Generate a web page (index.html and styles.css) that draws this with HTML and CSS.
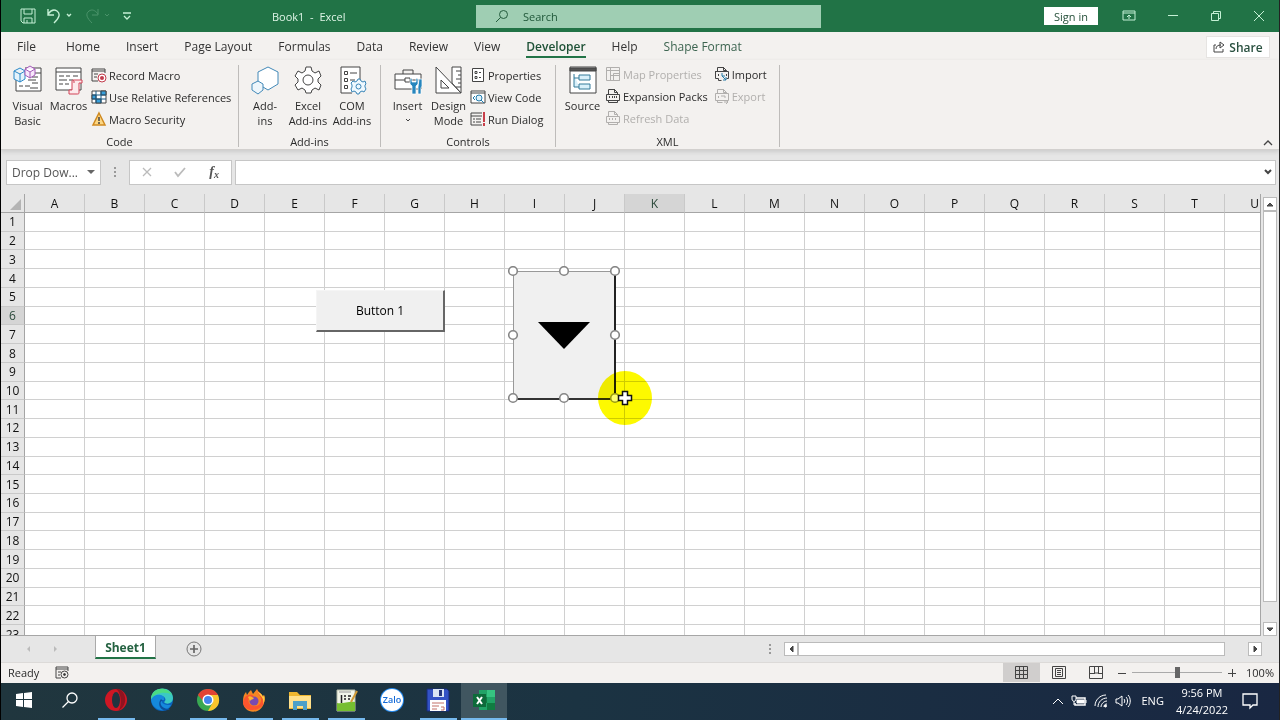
FILE: index.html
```html
<!DOCTYPE html>
<html lang="en">
<head>
<meta charset="utf-8">
<title>Book1 - Excel</title>
<link rel="stylesheet" href="styles.css">
</head>
<body>
<div class="app">
  <header class="titlebar">
    <div class="quick">
      <button aria-label="Save"><svg width="16" height="16" viewBox="0 0 16 16"><path d="M1 1h14v14H3l-2-2zM4 1v5h8V1M4 15v-5h8v5M7 15v-3"/></svg></button>
      <button aria-label="Undo"><svg width="28" height="16" viewBox="0 0 28 16"><path d="M2 1v6h6M2 6c3-4 6-5 9-3 4 3 2 7-3 12" stroke-width="1.4"/><path d="m21 6 2 2 2-2" stroke-width="1.4"/></svg></button>
      <button class="faded" aria-label="Redo"><svg width="28" height="16" viewBox="0 0 28 16"><path d="M14 1v6H8M14 6c-3-4-6-5-9-3-4 3-2 7 3 12M21 6l2 2 2-2"/></svg></button>
      <button aria-label="Customize Quick Access Toolbar"><svg width="10" height="10" viewBox="0 0 10 10"><path d="M1 2h8M2 5l3 3 3-3" stroke-width="1.3"/></svg></button>
    </div>
    <div class="doc-title">Book1&nbsp; -&nbsp; Excel</div>
    <label class="search"><svg width="14" height="14" viewBox="0 0 14 14"><circle cx="8.500" cy="5.500" r="4"/><path d="M5.500 8.500 1 13"/></svg><input type="text" placeholder="Search" aria-label="Search"></label>
    <div class="window-tools">
      <button class="signin">Sign in</button>
      <button aria-label="Ribbon Display Options"><svg width="14" height="12" viewBox="0 0 14 12"><path d="M1 1h12v9H1zM1 3h12M7 9V5M5 7l2-2 2 2"/></svg></button>
      <button aria-label="Minimize"><svg width="12" height="12" viewBox="0 0 12 12"><path d="M1 5.500h10"/></svg></button>
      <button aria-label="Restore"><svg width="12" height="12" viewBox="0 0 12 12"><path d="M1.500 3.500h7v7h-7zM3.500 3V1.500h7v7H9"/></svg></button>
      <button aria-label="Close"><svg width="12" height="12" viewBox="0 0 12 12"><path d="m1 1 10 10M11 1 1 11"/></svg></button>
    </div>
  </header>

  <nav class="tabs">
    <a href="#">File</a><a href="#">Home</a><a href="#">Insert</a><a href="#">Page Layout</a><a href="#">Formulas</a><a href="#">Data</a><a href="#">Review</a><a href="#">View</a><a href="#" class="active">Developer</a><a href="#">Help</a><a href="#" class="context">Shape Format</a>
    <button class="share"><svg width="12" height="12" viewBox="0 0 12 12"><path d="M3 4H1v7h9V8M3 8c0-3 2-4 5-4M7 1l4 3-4 3z"/></svg>Share</button>
  </nav>

  <section class="ribbon">
    <div class="group code">
      <div class="tools">
        <button class="big"><svg width="30" height="30" viewBox="0 0 30 30"><path d="M12 3h16v23H3V15M17 8h11" fill="#fff"/><path d="M6 21h4M12 21h5M19 18h6M15 15h8M19 12h6M17 23h8"/><g stroke="#2b88c8" fill="#e4f3fc"><path d="m1 6 6-3 5 3v8l-5 3-6-3zM1 6l6 3 5-3M7 9v8"/></g><g stroke="#a45bb8" fill="#f8e8fb"><path d="m12 4 5-3 5 3v6l-5 3-5-3zM12 4l5 3 5-3M17 7v6"/></g></svg>Visual<br>Basic</button>
        <button class="big"><svg width="30" height="30" viewBox="0 0 30 30"><path d="M2 3h25v22H2z" fill="#fff"/><path d="M2 7h25M5 11h5M12 11h4M19 11h5M5 15h8M15 15h4M5 19h4M11 19h4"/><path d="M19 15h9v3h-3v10c0 1-1 1-2 1h-8v-4h3V16c0-1 1-1 2 0v2" fill="#fceaec" stroke="#d24357"/></svg>Macros</button>
        <div class="stack">
          <button><svg width="16" height="16" viewBox="0 0 16 16"><path d="M7 14H1V2h13v4M1 4h13M3 7h4M3 10h3"/><circle cx="11" cy="11" r="4" fill="#fff" stroke="#c23b4b"/><circle cx="11" cy="11" r="2" fill="#c23b4b" stroke="none"/></svg>Record Macro</button>
          <button><svg width="16" height="16" viewBox="0 0 16 16"><path d="M1 2h14v12H1z" fill="#fff"/><path d="M1 6h4v4H1zM10 2h5v4h-5zM5 10h5v4H5z" fill="#37a0dc"/><path d="M1 6h14M1 10h14M5 2v12M10 2v12" stroke="#185b84"/></svg>Use Relative References</button>
          <button><svg width="16" height="16" viewBox="0 0 16 16"><path d="m8 2 6 12H2z" fill="#fcd784" stroke="#d08a20" stroke-width="1.5"/><path d="M8 6v4M8 11v2" stroke-width="1.5"/></svg>Macro Security</button>
        </div>
      </div>
      <h2>Code</h2>
    </div>
    <div class="group addins">
      <div class="tools">
        <button class="big"><svg width="30" height="30" viewBox="0 0 30 30"><g stroke="#4289b8"><path d="m18 2 10 5v12l-10 6L8 19V7z" fill="#fff"/><path d="m8 16 5 3v6l-5 4-6-4v-6z" fill="#eef6fb"/></g></svg>Add-<br>ins</button>
        <button class="big"><svg width="30" height="30" viewBox="0 0 30 30"><path d="m12 6 1-4h5l1 4 3 2 4-2 2 5-3 3v3l3 3-2 5-4-2-3 2-1 3h-5l-1-3-3-2-4 2-3-5 3-3v-3l-3-3 3-5 4 2z" fill="#fff"/><circle cx="15" cy="15" r="5"/></svg>Excel<br>Add-ins</button>
        <button class="big"><svg width="30" height="30" viewBox="0 0 30 30"><path d="M15 28H4V2h19v13" fill="#fff"/><path d="M7.500 6.500h3v3h-3zM7.500 13.500h3v3h-3zM7.500 20.500h3v3h-3zM13 8h7M13 15h5"/><path d="m20 16 1-2h2l1 2 2 1 2-1 1 3-1 1v2l1 2-2 3-2-1-2 1-1 2h-2l-1-2-2-1-2 1-1-3 1-2v-2l-1-2 2-2 2 1z" fill="#eff9ff" stroke="#3985b7"/><circle cx="21.500" cy="21.500" r="2.500" stroke="#3985b7"/></svg>COM<br>Add-ins</button>
      </div>
      <h2>Add-ins</h2>
    </div>
    <div class="group controls">
      <div class="tools">
        <button class="big"><svg width="30" height="30" viewBox="0 0 30 30"><path d="M2 9h26v15H2z" fill="#fff"/><path d="M10 9V5h10v4M2 15h10M17 15h11M12 13h5v4h-5z"/><path d="M17 14v5l2 2v8h4v-8l2-2v-5l-2-1v4h-4v-4zM26 14h3v7l-1 2v6h-3v-7z" fill="#2786bd" stroke="#fff" stroke-width=".7"/></svg>Insert<svg class="caret" width="8" height="5" viewBox="0 0 8 5"><path d="m2 1 2 2 2-2"/></svg></button>
        <button class="big"><svg width="30" height="30" viewBox="0 0 30 30"><path d="M18 18V2h9v26z" fill="#fff"/><path d="M2 2v26h25z" fill="#fff"/><path d="M7 15v8h8zM27 6h-5M27 10h-3M27 14h-5M27 18h-3M27 22h-5"/></svg>Design<br>Mode</button>
        <div class="stack">
          <button><svg width="16" height="16" viewBox="0 0 16 16"><path d="M2.500 1.500h11v13h-11z" fill="#fff"/><path d="M5 4.500h2v2H5zM5 9.500h2v2H5zM9 5.500h2M9 10.500h2"/></svg>Properties</button>
          <button><svg width="16" height="16" viewBox="0 0 16 16"><path d="M1 2h14v12H1zM1 4h14" fill="#fff"/><circle cx="9" cy="9" r="3" fill="#dff2fb" stroke="#237bad"/><path d="m11 11 3 3M5 7 3 9l2 2" stroke="#237bad"/></svg>View Code</button>
          <button><svg width="16" height="16" viewBox="0 0 16 16"><path d="M12 14H1V2h11M1 5h11M3 8h2M6 8h5M3 11h2M6 11h5"/><path d="M14 1v10M14 12v3" stroke="#c83e49" stroke-width="2"/></svg>Run Dialog</button>
        </div>
      </div>
      <h2>Controls</h2>
    </div>
    <div class="group xml">
      <div class="tools">
        <button class="big"><svg width="30" height="30" viewBox="0 0 30 30"><path d="M2 2h26v26H2z" fill="#fff"/><path d="M2 3h26v3H2z" fill="#555"/><path d="M11 10h11v5H11zM11 19h11v5H11zM6 9v13h5M6 13h5" fill="#d9f0fa" stroke="#357b99"/></svg>Source</button>
        <div class="stack">
          <button disabled><svg width="16" height="16" viewBox="0 0 16 16"><path d="M1.500 1.500h13v13h-13zM1 4.500h13M5.500 2v12M5 9.500h9M8.500 7.500h6v7h-6z"/></svg>Map Properties</button>
          <button><svg width="16" height="16" viewBox="0 0 16 16"><path d="M3.500 6V1.500h6l3 3v2M9.500 1v3.500h3M1.500 6.500h13v6h-13zM3.500 12v2.500h9V12M4.500 8v2M7.500 8v2M9.500 8v2M11.500 8v2"/></svg>Expansion Packs</button>
          <button disabled><svg width="16" height="16" viewBox="0 0 16 16"><path d="M3.500 6V1.500h6l3 3v2M9.500 1v3.500h3M1.500 6.500h13v6h-13zM3.500 12v2.500h9V12M5 8 4 9l1 1M7.500 8v2M10 8l1 1-1 1"/></svg>Refresh Data</button>
        </div>
        <div class="stack">
          <button><svg width="16" height="16" viewBox="0 0 16 16"><path d="M3.500 5V1.500h6l3 3v1M9.500 1v3.500h3M1.500 5.500h13v7h-2M1.500 5v7.500h3v2h3M5 8 4 9l1 1M12 8l1 1-1 1"/><path d="M8 7v3h3M8 10l4 4M12 11v3H9" stroke="#267aa5"/></svg>Import</button>
          <button disabled><svg width="16" height="16" viewBox="0 0 16 16"><path d="M3.500 5V1.500h6l3 3v1M9.500 1v3.500h3M1.500 5.500h13v7h-13zM3.500 12v2.500h5M5 8 4 9l1 1M7 8h4v2M10 14h4M12 12l2 2-2 2"/></svg>Export</button>
        </div>
      </div>
      <h2>XML</h2>
    </div>
    <button class="collapse" aria-label="Collapse the Ribbon"><svg width="10" height="7" viewBox="0 0 10 7"><path d="m1 5 4-4 4 4" stroke-width="1.3"/></svg></button>
  </section>

  <section class="formula-bar">
    <button class="name-box">Drop Dow...<svg width="8" height="5" viewBox="0 0 8 5"><path d="M0 0h8L4 4z" fill="#666" stroke="none"/></svg></button>
    <span class="dots"></span>
    <div class="entry">
      <button disabled aria-label="Cancel"><svg width="12" height="12" viewBox="0 0 12 12"><path d="m2 2 8 8M10 2l-8 8" stroke-width="1.3"/></svg></button>
      <button disabled aria-label="Enter"><svg width="14" height="12" viewBox="0 0 14 12"><path d="m2 6 3 4 7-8" stroke-width="1.8"/></svg></button>
      <button class="fx" aria-label="Insert Function">f<small>x</small></button>
    </div>
    <label class="formula"><input type="text" aria-label="Formula bar"><svg width="10" height="7" viewBox="0 0 10 7"><path d="m2 1 3 3 3-3" stroke-width="2"/></svg></label>
  </section>

  <main class="workspace">
    <div class="sheet">
      <table class="cells"><thead><tr id="columns"><th class="corner"><svg width="12" height="12" viewBox="0 0 12 12"><path d="M11 0v11H0z" fill="#b4b4b4" stroke="none"/></svg></th></tr></thead><tbody id="rows"></tbody></table>
      <button class="form-button">Button 1</button>
      <div class="shape">
        <svg width="52" height="27" viewBox="0 0 52 27"><path d="M0 0h52L26 27z" fill="#000" stroke="none"/></svg>
      </div>
      <span class="halo"></span>
      <svg class="handles" width="112" height="138" viewBox="0 0 112 138"><g fill="#fff" stroke="#858585" stroke-width="1.6"><circle cx="5" cy="5" r="4.300"/><circle cx="56" cy="5" r="4.300"/><circle cx="107" cy="5" r="4.300"/><circle cx="5" cy="69" r="4.300"/><circle cx="107" cy="69" r="4.300"/><circle cx="5" cy="132" r="4.300"/><circle cx="56" cy="132" r="4.300"/><circle cx="107" cy="132" r="4.300" fill="#ffff70" stroke="#999a12"/></g></svg>
      <svg class="cursor" width="16" height="16" viewBox="0 0 16 16"><path d="M5.500 1.500h5v4h4v5h-4v4h-5v-4h-4v-5h4z" fill="#fff" stroke="#111" stroke-width="1.500"/></svg>
    </div>
    <div class="vscroll">
      <button aria-label="Scroll up"><svg width="8" height="5" viewBox="0 0 8 5"><path d="m1 4 3-3 3 3z" fill="#555"/></svg></button>
      <span class="vthumb"></span>
      <button aria-label="Scroll down"><svg width="8" height="5" viewBox="0 0 8 5"><path d="m1 1 3 3 3-3z" fill="#555"/></svg></button>
    </div>
  </main>

  <section class="sheet-bar">
    <div class="sheet-nav">
      <button disabled aria-label="Previous sheet"><svg width="5" height="8" viewBox="0 0 5 8"><path d="M4 1v6L1 4z" fill="#bbb" stroke="none"/></svg></button>
      <button disabled aria-label="Next sheet"><svg width="5" height="8" viewBox="0 0 5 8"><path d="M1 1v6l3-3z" fill="#bbb" stroke="none"/></svg></button>
    </div>
    <button class="sheet-tab">Sheet1</button>
    <button class="new-sheet" aria-label="New sheet"><svg width="16" height="16" viewBox="0 0 16 16"><circle cx="8" cy="8" r="7" stroke="#777"/><path d="M8 4v8M4 8h8" stroke="#666" stroke-width="1.700"/></svg></button>
    <span class="dots"></span>
    <div class="hscroll">
      <button aria-label="Scroll left"><svg width="5" height="8" viewBox="0 0 5 8"><path d="M4 1v6L1 4z" fill="#444"/></svg></button>
      <span class="hthumb"></span>
      <button aria-label="Scroll right"><svg width="5" height="8" viewBox="0 0 5 8"><path d="M1 1v6l3-3z" fill="#444"/></svg></button>
    </div>
  </section>

  <footer class="status">
    <span class="ready">Ready</span>
    <button aria-label="Record macro"><svg width="14" height="13" viewBox="0 0 14 13"><path d="M6 12H1V1h12v4M1 3h12M3 6h3M3 9h2"/><circle cx="9.500" cy="8.500" r="3.500"/><circle cx="9.500" cy="8.500" r="1" fill="#333"/></svg></button>
    <div class="views">
      <button class="chosen" aria-label="Normal"><svg width="13" height="13" viewBox="0 0 13 13"><path d="M.5.500h12v12H.5zM.5 4.500h12M.5 8.500h12M4.500.5v12M8.500.5v12"/></svg></button>
      <button aria-label="Page Layout"><svg width="14" height="13" viewBox="0 0 14 13"><path d="M.5.500h13v12H.5zM3.500 2.500h7v8h-7zM5 4.500h4M5 6.500h4M5 8.500h4"/></svg></button>
      <button aria-label="Page Break Preview"><svg width="14" height="13" viewBox="0 0 14 13"><path d="M.5.500h13v12H.5zM5.500 1v6h4V1M1 7.500h5M9 7.500h4"/></svg></button>
    </div>
    <div class="zoom"><button aria-label="Zoom out"><svg width="8" height="8" viewBox="0 0 8 8"><path d="M0 4.500h8"/></svg></button><input type="range" min="0" max="100" value="51" aria-label="Zoom"><button aria-label="Zoom in"><svg width="8" height="8" viewBox="0 0 8 8"><path d="M0 4.500h8M4.500 0v8"/></svg></button><span>100%</span></div>
  </footer>

  <div class="taskbar">
    <div class="launchers">
      <button aria-label="Start"><svg width="16" height="16" viewBox="0 0 16 16"><path d="m0 2 7-1v6H0zM8 1l8-1v7H8zM0 8h7v7l-7-1zM8 8h8v8l-8-1z" fill="#fff" stroke="none"/></svg></button>
      <button aria-label="Search"><svg width="16" height="16" viewBox="0 0 16 16"><circle cx="10" cy="6" r="5" stroke="#fff" stroke-width="1.300"/><path d="m6.500 9.500-6 6" stroke="#fff" stroke-width="1.300"/></svg></button>
      <button class="open" aria-label="Opera"><svg width="24" height="24" viewBox="0 0 24 24"><circle cx="12" cy="12" r="11" fill="#cf1724" stroke="none"/><path d="M12 1c8-2 15 15 2 22 4-3 4-19-2-22" fill="#8f1320" stroke="none"/><ellipse cx="12" cy="12" rx="4" ry="8" fill="#213440" stroke="none"/></svg></button>
      <button aria-label="Edge"><svg width="24" height="24" viewBox="0 0 24 24"><circle cx="12" cy="12" r="11" fill="#0a63be" stroke="none"/><path d="M1 12C0-3 23-3 23 10c0 6-7 7-9 4 3-2 1-6-3-6-5 0-9 3-10 4" fill="#3bc9c3" stroke="none"/><path d="M1 11C2-2 18-2 22 7c-5-4-17-3-21 4" fill="#4bdb83" stroke="none"/><path d="M1 12C4 4 16 6 14 12c-4-1-3 6 7 5-5 9-18 6-20-5" fill="#1589dc" stroke="none"/><path d="M14 14c-4-5-7 7 6 7-8 5-14-4-9-10" fill="#0b4f9d" stroke="none"/></svg></button>
      <button class="open" aria-label="Chrome"><svg width="24" height="24" viewBox="0 0 24 24"><g stroke="none"><circle cx="12" cy="12" r="11" fill="#39a852"/><path d="M2 7C6-1 18-1 22 7H12L8 14z" fill="#e34334"/><path d="M12 7h10c4 9-3 16-10 16l5-9z" fill="#fbc52d"/><circle cx="12" cy="12" r="5.500" fill="#fff"/><circle cx="12" cy="12" r="4" fill="#4485ed"/></g></svg></button>
      <button class="open" aria-label="Firefox"><svg width="24" height="24" viewBox="0 0 24 24"><g stroke="none"><path d="M7 4 9 2l2 4 4-5c1 4 5 4 6 8l1-2c4 20-21 22-21 6 0-4 1-7 3-9l1 3z" fill="#f58623"/><path d="m15 1c0 6 5 7 4 12-1 6-9 7-12 2-2-4 1-6 4-5 2-3-2-4-4-3-3 0-5 3-6 7C1 27 27 24 22 7l-1 2c-1-4-5-4-6-8" fill="#fc552e"/><path d="M15 2c1 5 8 7 6 14 2-3 2-6 1-9l-1 2c-1-4-5-4-6-7" fill="#ffcf3c"/><circle cx="12" cy="13" r="4.500" fill="#794ab1"/><path d="M6 9c2-2 4 0 6 1-1 2-3 1-4 3z" fill="#ffb42e"/></g></svg></button>
      <button class="open" aria-label="File Explorer"><svg width="24" height="24" viewBox="0 0 24 24"><g stroke="none"><path d="M1 4h8l3 3h11v14H1z" fill="#eeb62f"/><path d="M1 8h22v12H1z" fill="#ffe08b"/><path d="M5 13h14v9h-4v-4H9v4H5z" fill="#4da0c7"/></g></svg></button>
      <button class="open" aria-label="Notepad++"><svg width="24" height="24" viewBox="0 0 24 24"><path d="M3 2h18v21H3z" fill="#f1f5e9" stroke="#b5bbaa"/><path d="M3 15c6 1 12-2 18-1v9H3z" fill="#76be31" stroke="none"/><path d="M7.500 7v8M10 8h2M10 11h2M14 8h3M14 11h2" stroke="#222" stroke-width="1.500"/><path d="M5 4h12" stroke="#999"/><path d="m23 3-6 11" stroke="#d19b37" stroke-width="2"/></svg></button>
      <button aria-label="Zalo"><span class="zalo">Zalo</span></button>
      <button class="open" aria-label="Save tool"><svg width="24" height="24" viewBox="0 0 24 24"><path d="M1 1h20l2 2v20H1z" fill="#3352c5" stroke="#172a78"/><path d="M7 1h11v8H7z" fill="#d9e4f4" stroke="none"/><path d="M13 2h3v6h-3z" fill="#24357e" stroke="none"/><path d="M4 12h16v11H4z" fill="#fff" stroke="none"/><path d="M6 15h12M6 18h7M6 21h5M15 19h3v3h-3" stroke="#c27168"/></svg></button>
      <button class="open current" aria-label="Excel"><svg width="24" height="24" viewBox="0 0 24 24"><g stroke="none"><path d="M7 2h16v20H7z" fill="#21a366"/><path d="M15 2h8v7h-8z" fill="#36c481"/><path d="M15 15h8v7h-8zM7 9h8v6H7z" fill="#107c41"/><path d="M1 6h13v13H1z" fill="#0d6b3a"/></g><path d="m5 9 5 7M10 9l-5 7" stroke="#fff" stroke-width="2"/></svg></button>
    </div>
    <div class="tray">
      <svg width="12" height="8" viewBox="0 0 12 8"><path d="m1 7 5-5 5 5"/></svg>
      <svg width="16" height="12" viewBox="0 0 16 12"><path d="M5 3h9v7H4V8" stroke-width="1.500"/><path d="M6 5h7v3H6z" fill="#fff"/><path d="M15 5v3M1 1v3c0 3 4 3 4 0V1zM3 6v4"/></svg>
      <svg width="14" height="14" viewBox="0 0 14 14"><path d="M1 12C1 6 6 1 12 1M4 13c0-5 4-9 9-9M7 13c0-3 3-6 6-6M10 13c0-2 1-3 3-3"/><circle cx="11.500" cy="12" r="1" fill="#fff"/></svg>
      <svg width="16" height="14" viewBox="0 0 16 14"><path d="M1 5h2l4-3v10L3 9H1zM9 5c1 1 1 3 0 4M11 3c2 2 2 6 0 8M13 1c3 3 3 9 0 12"/></svg>
      <span>ENG</span>
      <time>9:56 PM<br>4/24/2022</time>
      <svg width="18" height="18" viewBox="0 0 18 18"><path d="M2 2h14v11h-4l-3 3v-3H2z" stroke-width="1.300"/></svg>
    </div>
  </div>
</div>
<script src="grid.js"></script>
</body>
</html>
```

FILE: styles.css
```css
* { box-sizing: border-box; }
body { margin: 0; font: 11px/15px "Open Sans", "Noto Sans", sans-serif; color: #2b2b2b; }
button { font: inherit; color: inherit; background: none; border: 0; padding: 0; display: flex; align-items: center; justify-content: center; }
svg { flex: none; display: block; fill: none; stroke: #444; stroke-width: 1; }
input { font: inherit; border: 0; background: none; min-width: 0; outline: 0; }
.app { height: 100vh; display: flex; flex-direction: column; overflow: hidden; background: #e6e6e6; border-left: 1px solid #000; border-right: 1px solid #222; }

.titlebar { flex: none; height: 32px; display: flex; align-items: center; background: #217346; color: #dff5e7; }
.titlebar svg { stroke: #c5f0d5; }
.quick { width: 271px; display: flex; align-items: center; gap: 10px; padding-left: 19px; }
.quick .faded { opacity: .25; }
.doc-title { width: 204px; }
.search { width: 345px; height: 23px; display: flex; align-items: center; gap: 14px; padding-left: 19px; background: #9fceb3; }
.titlebar .search svg { stroke: #245c3d; }
.search input { flex: 1; padding: 0; }
.search input::placeholder { color: #1f5739; opacity: 1; }
.window-tools { margin-left: auto; display: flex; align-items: center; gap: 31px; padding-right: 14px; }
.signin { width: 54px; height: 18px; background: #fff; color: #26503a; margin-right: -7px; }

.tabs { flex: none; height: 28px; display: flex; align-items: stretch; gap: 26px; padding: 0 9px 0 16px; background: #f3f1ef; font-size: 12px; }
.tabs a { color: #333; text-decoration: none; padding-top: 7px; height: 26px; white-space: nowrap; }
.tabs a:first-child { margin-right: 4px; }
.tabs .active { color: #1d5136; font-weight: 600; border-bottom: 2px solid #217346; }
.tabs .context { color: #3c6450; }
.share { margin: 4px 0 2px auto; width: 64px; gap: 4px; background: #fff; border: 1px solid #e6e4e2; font-weight: 600; color: #2a5140; }

.ribbon { flex: none; height: 90px; display: flex; padding: 5px 0 2px; background: #f3f1ef; border-bottom: 1px solid #d2d0ce; box-shadow: 0 2px 4px #ccc; z-index: 1; }
.group { display: flex; flex-direction: column; justify-content: space-between; border-right: 1px solid #bebcba; white-space: nowrap; }
.group h2 { margin: 0; font: inherit; line-height: 11px; text-align: center; }
.tools { display: flex; align-items: flex-start; padding-left: 6px; }
.code { width: 238px; }
.addins { width: 142px; }
.addins .tools { padding-left: 5px; }
.controls { width: 175px; }
.xml { width: 224px; }
.big { width: 41px; flex-direction: column; justify-content: flex-start; line-height: 15px; }
.big > svg:first-child { margin-bottom: 3px; }
.addins .big { width: 44px; }
.addins .big:first-child { width: 42px; }
.caret { margin-top: 5px; }
.stack { display: flex; flex-direction: column; align-items: flex-start; padding-left: 2px; margin-top: -1px; }
.stack button { height: 22px; gap: 2px; }
.stack button:disabled { color: #b1afad; }
.stack button:disabled svg { stroke: #b1afad; }
.controls .stack { padding-left: 1px; }
.xml .stack { margin-top: -2px; }
.xml .stack + .stack { padding-left: 6px; }
.collapse { margin: auto 6px 0 auto; }

.formula-bar { flex: none; height: 44px; display: flex; align-items: center; padding: 0 3px 0 5px; font-size: 12px; }
.name-box { width: 95px; height: 25px; justify-content: space-between; padding: 0 5px; background: #fff; border: 1px solid #c6c6c6; color: #555; }
.dots { width: 28px; height: 12px; background: radial-gradient(circle, #999 1px, transparent 1px) center top / 28px 4px; }
.entry { width: 103px; height: 25px; display: grid; grid-template-columns: repeat(3, 1fr); background: #fff; border: 1px solid #c6c6c6; }
.entry :disabled svg { stroke: #bbb; }
.fx { font: italic 700 14px "Liberation Serif", serif; color: #555; }
.fx small { font-size: 10px; padding-top: 4px; }
.formula { flex: 1; height: 25px; margin-left: 3px; display: flex; align-items: center; background: #fff; border: 1px solid #c6c6c6; padding-right: 2px; }
.formula input { flex: 1; }

.workspace { flex: 1; min-height: 0; display: flex; }
.sheet { flex: 1; min-width: 0; position: relative; overflow: hidden; border-right: 1px solid #a6a6a6; border-bottom: 1px solid #a6a6a6; }
.cells { border-collapse: separate; border-spacing: 0; table-layout: fixed; width: 1284px; height: 450px; background: #fff; font-size: 12px; line-height: 16px; color: #111; }
.cells th { font-weight: 400; background: #e6e6e6; padding: 1px 0 0; width: 60px; border-right: 1px solid #c9c9c9; border-bottom: 1px solid #c9c9c9; }
.cells thead th { height: 19px; border-bottom-color: #a5a5a5; }
.cells th.corner, .cells tbody th { width: 24px; border-right-color: #a5a5a5; }
.corner svg { margin: 3px 0 0 9px; }
.cells td { padding: 0; border-right: 1px solid #d0d0d0; border-bottom: 1px solid #d0d0d0; }
.cells th.selected { background: #d5d5d5; color: #2a493a; }
.form-button { position: absolute; left: 315px; top: 96px; width: 129px; height: 42px; background: #f0f0f0; border: solid #f5f5f5; border-width: 1px 2px 2px 1px; border-right-color: #666; border-bottom-color: #666; font-size: 12px; color: #000; }
.shape { position: absolute; left: 512px; top: 77px; width: 103px; height: 129px; display: flex; align-items: center; justify-content: center; background: #f0f0f0; border: solid #999; border-width: 1px 2px 2px 1px; border-right-color: #222; border-bottom-color: #333; }
.halo { position: absolute; left: 597px; top: 177px; width: 54px; height: 54px; border-radius: 50%; background: #fdf900; mix-blend-mode: multiply; }
.handles { position: absolute; left: 507px; top: 72px; }
.cursor { position: absolute; left: 616px; top: 196px; }
.vscroll { width: 18px; padding: 3px 2px 0; display: flex; flex-direction: column; align-items: center; }
.vscroll button { width: 14px; height: 14px; background: #fff; border: 1px solid #bbb; }
.vthumb { width: 14px; flex: 1; margin-bottom: 20px; background: #fff; border: 1px solid #bbb; }

.sheet-bar { flex: none; height: 26px; display: flex; align-items: center; padding-right: 17px; }
.sheet-nav { width: 94px; display: flex; gap: 22px; padding-left: 25px; }
.sheet-tab { width: 61px; height: 23px; align-self: flex-start; background: #fff; border: solid #aaa; border-width: 0 1px; border-bottom: 2px solid #217346; padding-top: 2px; font-weight: 700; font-size: 12px; color: #246241; }
.new-sheet { margin-left: 30px; }
.sheet-bar .dots { margin-left: auto; }
.hscroll { width: 478px; height: 14px; display: flex; }
.hscroll button { width: 14px; background: #fff; border: 1px solid #bbb; }
.hthumb { flex: 1; margin-right: 23px; background: #fff; border: 1px solid #bbb; }

.status { flex: none; height: 21px; display: flex; align-items: center; background: #f3f1ef; border-top: 1px solid #dcdad8; padding: 0 5px 1px 7px; }
.ready { width: 47px; }
.views { margin-left: auto; display: flex; align-self: stretch; }
.views button { width: 37px; }
.views .chosen { background: #d0cecd; }
.zoom { display: flex; align-items: center; padding-left: 4px; }
.zoom input { width: 90px; height: 14px; margin: 0 6px; appearance: none; background: linear-gradient(#aaa, #aaa) center / 100% 1px no-repeat; }
.zoom input::-webkit-slider-thumb { appearance: none; width: 5px; height: 11px; background: #666; }
.zoom span { width: 38px; text-align: right; }

.taskbar { flex: none; height: 37px; display: flex; justify-content: space-between; background: linear-gradient(90deg, #20363e, #1b3342 45%, #192742); color: #fff; }
.launchers { display: flex; }
.launchers button { width: 46px; padding-bottom: 1px; border-bottom: 2px solid transparent; }
.launchers .open { background: linear-gradient(#76b9ed, #76b9ed) center bottom / 37px 2px no-repeat border-box; }
.launchers .current { background: #405660; border-color: #76b9ed; }
.zalo { width: 22px; height: 22px; border-radius: 50%; background: #fff; color: #126ad8; font-size: 9px; font-weight: 600; line-height: 21px; box-shadow: 0 0 0 1px #238af0; text-align: center; }
.tray { display: flex; align-items: center; gap: 7px; padding: 0 20px 2px 0; }
.tray svg { stroke: #fff; }
.tray span { margin: 0 5px 0 3px; }
.tray time { line-height: 17px; text-align: center; margin-right: 6px; }
```

FILE: grid.js
```js
const columns = document.getElementById("columns");
const rows = document.getElementById("rows");
const letters = [..."ABCDEFGHIJKLMNOPQRSTU"];

for (const letter of letters) {
  const th = document.createElement("th");
  th.scope = "col";
  th.textContent = letter;
  if (letter === "K") th.className = "selected";
  columns.append(th);
}

for (let n = 1; n <= 23; n++) {
  const tr = rows.insertRow();
  const th = document.createElement("th");
  th.scope = "row";
  th.textContent = n;
  if (n === 6) th.className = "selected";
  tr.append(th);
  letters.forEach(() => tr.insertCell());
}
```
